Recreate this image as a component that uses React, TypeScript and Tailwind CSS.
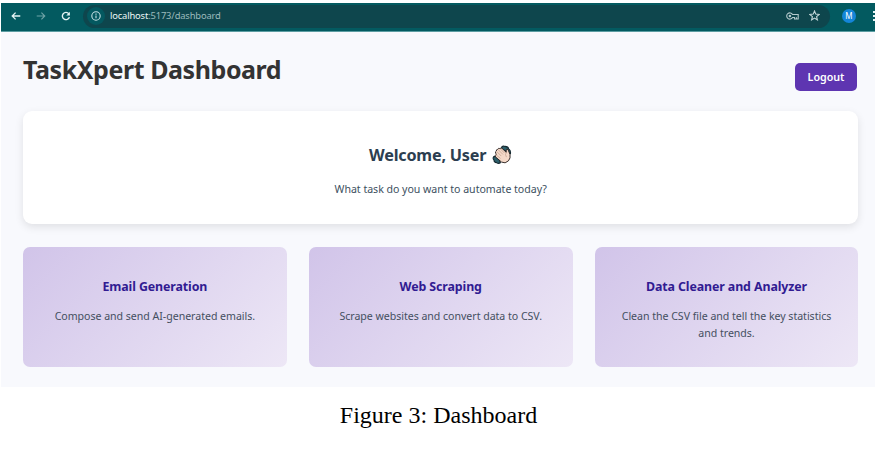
import React from "react";

const tasks = [
  { title: "Email Generation", lines: ["Compose and send AI-generated emails."] },
  { title: "Web Scraping", lines: ["Scrape websites and convert data to CSV."] },
  {
    title: "Data Cleaner and Analyzer",
    lines: ["Clean the CSV file and tell the key statistics", "and trends."],
  },
];

function BackIcon() {
  return (
    <svg className="h-[10px] w-[10px]" viewBox="0 0 10 10" fill="none" stroke="#e4f3f4" strokeWidth="1.3">
      <path d="M9.3 5H1.2M4.6 1.6 1.2 5 4.6 8.4" />
    </svg>
  );
}

function ForwardIcon() {
  return (
    <svg className="h-[10px] w-[10px]" viewBox="0 0 10 10" fill="none" stroke="#6fa3a7" strokeWidth="1.1">
      <path d="M.7 5h8.1M5.4 1.6 8.8 5 5.4 8.4" />
    </svg>
  );
}

function ReloadIcon() {
  return (
    <svg className="h-[10px] w-[10px]" viewBox="0 0 10 10" fill="none" stroke="#e4f3f4" strokeWidth="1.4">
      <path d="M8.4 6.1A3.6 3.6 0 1 1 7.8 2.8" />
      <path d="M8.9.8v3.6H5.3z" fill="#e4f3f4" stroke="none" />
    </svg>
  );
}

function InfoIcon() {
  return (
    <svg className="h-[10px] w-[10px]" viewBox="0 0 10 10" fill="none" stroke="#c6e2e4" strokeWidth="1.1">
      <circle cx="5" cy="5" r="4.2" />
      <path d="M5 4.5v2.8M5 2.6v1.1" />
    </svg>
  );
}

function KeyIcon() {
  return (
    <svg className="h-2 w-[13px]" viewBox="0 0 13 8" fill="none" stroke="#b3c9cc" strokeWidth="1.1">
      <path d="M6.5 2.5A3.1 3.1 0 1 0 6.5 5.5H8.5V7H12.2V2.5Z" />
      <path d="M10.4 7V5.3" />
      <circle cx="3.9" cy="4" r="1.3" fill="#b3c9cc" stroke="none" />
    </svg>
  );
}

function StarIcon() {
  return (
    <svg className="h-[11px] w-[11px]" viewBox="0 0 11 11" fill="none" stroke="#c5d8da" strokeWidth="1.1">
      <path d="M5.5 1 6.8 4.1l3.4.3-2.6 2.2.8 3.3-2.9-1.8-2.9 1.8.8-3.3L.8 4.4l3.4-.3Z" />
    </svg>
  );
}

function WavingHand() {
  return (
    <svg className="h-5 w-5" viewBox="0 0 20 20" strokeLinecap="round" strokeLinejoin="round">
      <path d="M9.6 2.2Q11 .6 13 1.4Q16.2 1.6 16.8 4Q19 5.6 18.4 8.8L15.5 7L10 4Z" fill="#2d606b" stroke="#152a32" strokeWidth="1.1" />
      <path d="M1.8 11.6Q.4 13.4 2 15Q2 17.6 4.6 17.6Q6.4 19 8.4 17.8L7 14L3.4 11.4Z" fill="#2d606b" stroke="#152a32" strokeWidth="1.1" />
      <path
        d="M3.6 8Q2.9 6.5 4.3 6Q4.2 4.4 5.8 4.3Q6.3 2.8 7.9 3.5Q9.2 2.4 10.4 3.7L14.2 7.3L14.2 5Q14.6 3.4 16 4.6L18 9.4Q18.9 13.1 16.4 15.9Q13.2 19.1 9.6 17.1L3.6 12Q2.3 10.7 3.8 9.8Z"
        fill="#f5d9c8"
        stroke="#251d1c"
        strokeWidth=".9"
      />
      <path d="M4.7 6.5 9 10.8M6.3 4.8l4.4 4.4M8.4 4l3.6 3.6M4.2 10l4 3.2M14.2 7.3Q12.7 9.7 14.2 11.8" fill="none" stroke="#a9826f" strokeWidth=".5" />
    </svg>
  );
}

function BrowserBar() {
  return (
    <div className="flex h-[29px] items-center border-b border-[#5c9da2] bg-[#035a60] pt-px pl-[10px] pb-[3px]">
      <BackIcon />
      <span className="ml-[15px] flex"><ForwardIcon /></span>
      <span className="ml-[15px] flex"><ReloadIcon /></span>
      <div className="ml-3 flex h-[23px] w-[749px] items-center rounded-full bg-[#0e464d] pr-[10px] pl-1">
        <span className="flex h-[18px] w-[18px] items-center justify-center rounded-full bg-[#045960]"><InfoIcon /></span>
        <span className="ml-[5px] pb-px text-[9.4px] leading-none tracking-[-0.16px] whitespace-nowrap text-[#9bbabc]">
          <span className="text-[#edf6f6]">localhost</span>:5173/dashboard
        </span>
        <span className="ml-auto flex"><KeyIcon /></span>
        <span className="ml-[10px] flex pb-px"><StarIcon /></span>
      </div>
      <span className="ml-3 flex h-[14px] w-[14px] shrink-0 items-center justify-center rounded-full bg-[#1485d8] text-[8px] leading-none text-white">M</span>
      <span className="ml-[17px] flex w-[2px] shrink-0 flex-col gap-[2px]">
        <i className="h-[2px] w-[2px] bg-[#e4f3f4]" />
        <i className="h-[2px] w-[2px] bg-[#e4f3f4]" />
        <i className="h-[2px] w-[2px] bg-[#e4f3f4]" />
      </span>
    </div>
  );
}

export default function App() {
  return (
    <div className="h-[472px] w-[875px] overflow-hidden bg-white pt-[3px] pl-px font-['Noto_Sans',sans-serif]">
      <BrowserBar />
      <main className="h-[355px] bg-[#f8f9fd] pt-5 pr-[16.6px] pl-[22px]">
        <header className="flex h-[59px] items-start justify-between">
          <h1 className="text-[25px] leading-[35px] font-bold tracking-[-0.43px] whitespace-nowrap text-[#333]">TaskXpert Dashboard</h1>
          <button className="mt-[11px] mr-[1.4px] h-7 w-[62px] rounded-[5px] bg-[#5e35b1] pt-px text-[10.7px] font-semibold whitespace-nowrap text-white">Logout</button>
        </header>
        <section className="flex h-[113px] flex-col items-center rounded-[9px] bg-white pt-8 shadow-[0_3px_8px_rgba(0,0,0,0.1)]">
          <h2 className="flex h-6 items-center gap-[6px] text-[16.2px] font-bold tracking-[-0.2px] whitespace-nowrap text-[#2c3e50]">
            <span>Welcome, User</span>
            <WavingHand />
          </h2>
          <p className="mt-[13px] text-[10.6px] leading-[18px] tracking-[-0.03px] whitespace-nowrap text-[#3c4f60]">What task do you want to automate today?</p>
        </section>
        <section className="mt-[23px] grid grid-cols-3 gap-[22px]">
          {tasks.map((task) => (
            <article key={task.title} className="h-[120px] rounded-[7px] bg-[linear-gradient(135deg,#d1c4e9,#ede7f6)] pt-[30px] text-center">
              <h3 className="text-[12.4px] leading-5 font-bold tracking-[-0.1px] whitespace-nowrap text-[#311b92]">{task.title}</h3>
              <p className="mt-[11px] text-[10.6px] leading-[17px] tracking-[-0.03px] whitespace-nowrap text-[#444f5f]">
                {task.lines.map((line) => (
                  <span key={line} className="block">{line}</span>
                ))}
              </p>
            </article>
          ))}
        </section>
      </main>
      <p className="mt-3 pl-px text-center font-['Liberation_Serif',serif] text-[24px] leading-8 text-black">Figure 3: Dashboard</p>
    </div>
  );
}
